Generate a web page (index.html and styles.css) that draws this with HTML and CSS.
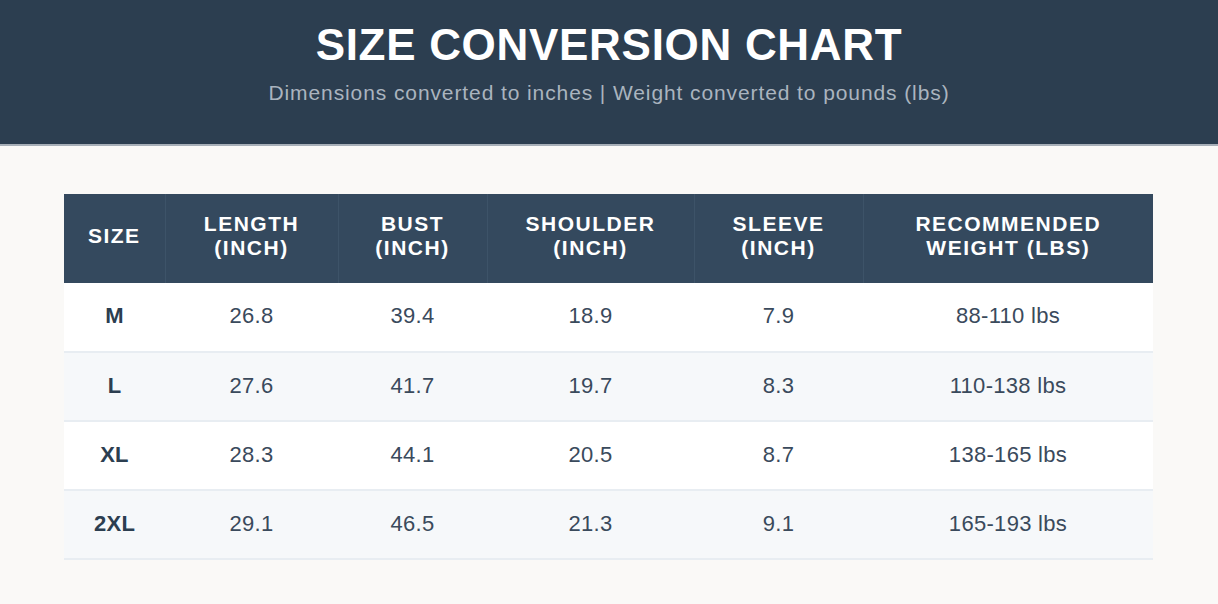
FILE: index.html
```html
<!DOCTYPE html>
<html>
<head>
<meta charset="utf-8">
<link rel="stylesheet" href="styles.css">
</head>
<body>
<header class="banner">
  <h1 class="title">SIZE CONVERSION CHART</h1>
  <p class="subtitle">Dimensions converted to inches | Weight converted to pounds (lbs)</p>
</header>
<main class="content">
  <table class="chart">
    <colgroup>
      <col class="c-size"><col class="c-length"><col class="c-bust"><col class="c-shoulder"><col class="c-sleeve"><col class="c-weight">
    </colgroup>
    <thead>
      <tr>
        <th>Size</th>
        <th>Length<br>(Inch)</th>
        <th>Bust<br>(Inch)</th>
        <th>Shoulder<br>(Inch)</th>
        <th>Sleeve<br>(Inch)</th>
        <th>Recommended<br>Weight (lbs)</th>
      </tr>
    </thead>
    <tbody>
      <tr><td class="size">M</td><td>26.8</td><td>39.4</td><td>18.9</td><td>7.9</td><td>88-110 lbs</td></tr>
      <tr><td class="size">L</td><td>27.6</td><td>41.7</td><td>19.7</td><td>8.3</td><td>110-138 lbs</td></tr>
      <tr><td class="size">XL</td><td>28.3</td><td>44.1</td><td>20.5</td><td>8.7</td><td>138-165 lbs</td></tr>
      <tr><td class="size">2XL</td><td>29.1</td><td>46.5</td><td>21.3</td><td>9.1</td><td>165-193 lbs</td></tr>
    </tbody>
  </table>
</main>
</body>
</html>
```
FILE: styles.css
```css
html, body {
  margin: 0;
  padding: 0;
}
body {
  background: #faf9f7;
  font-family: "Liberation Sans", Arial, Helvetica, sans-serif;
  color: #34495e;
}
.banner {
  background: #2c3e50;
  height: 146px;
  border-bottom: 2px solid #a7afb8;
  box-sizing: border-box;
  text-align: center;
  padding-top: 19px;
}
.title {
  margin: 0;
  color: #ffffff;
  font-size: 44px;
  font-weight: 700;
  letter-spacing: 0.7px;
  line-height: 52px;
}
.subtitle {
  margin: 10px 0 0;
  color: #aab4bf;
  font-size: 21px;
  letter-spacing: 0.9px;
  line-height: 24px;
}
.content {
  padding: 48px 65px 0 64px;
}
.chart {
  width: 1089px;
  border-collapse: collapse;
  table-layout: fixed;
}
.c-size { width: 101px; }
.c-length { width: 173px; }
.c-bust { width: 149px; }
.c-shoulder { width: 207px; }
.c-sleeve { width: 169px; }
.c-weight { width: 290px; }
.chart th {
  background: #34495e;
  color: #ffffff;
  font-size: 21px;
  font-weight: 700;
  text-transform: uppercase;
  letter-spacing: 1.5px;
  line-height: 24px;
  height: 89px;
  padding: 0 2px 5px;
  box-sizing: border-box;
  text-align: center;
  vertical-align: middle;
  border-left: 1px solid #3d5368;
}
.chart th:first-child {
  border-left: none;
}
.chart td {
  height: 69px;
  text-align: center;
  vertical-align: middle;
  font-size: 22px;
  letter-spacing: 0.3px;
  color: #3a4a5c;
  border-bottom: 2px solid #e8edf2;
  padding: 0 0 2px;
  box-sizing: border-box;
}
.chart tbody tr {
  background: #ffffff;
}
.chart tbody tr:nth-child(even) {
  background: #f6f8fa;
}
.chart td.size {
  font-weight: 700;
  color: #2c3e50;
}
```
